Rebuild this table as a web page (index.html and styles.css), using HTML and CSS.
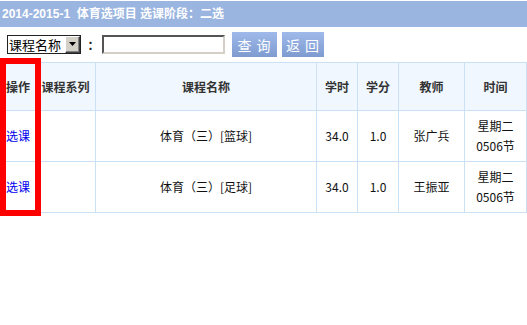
FILE: index.html
```html
<!DOCTYPE html>
<html lang="zh-CN">
<head>
<meta charset="utf-8">
<link rel="stylesheet" href="styles.css">
</head>
<body>
<div class="titlebar">2014-2015-1&nbsp; 体育选项目 选课阶段：二选</div>
<div class="toolbar">
  <span class="selbox">
    <select class="sel"><option>课程名称</option></select>
    <span class="arrow"><svg width="9" height="5" viewBox="0 0 9 5"><path d="M1 0h7L4.5 4z" fill="#000"/></svg></span>
  </span>
  <span class="colon">：</span>
  <input class="txt" type="text">
  <button class="btn btn-q">查 询</button>
  <button class="btn btn-r">返 回</button>
</div>
<div class="tablewrap">
<table class="grid">
  <colgroup>
    <col class="c1"><col class="c2"><col class="c3"><col class="c4"><col class="c5"><col class="c6"><col class="c7">
  </colgroup>
  <thead>
    <tr><th>操作</th><th>课程系列</th><th>课程名称</th><th>学时</th><th>学分</th><th>教师</th><th>时间</th></tr>
  </thead>
  <tbody>
    <tr><td><a href="#">选课</a></td><td></td><td>体育（三）[篮球]</td><td>34.0</td><td>1.0</td><td>张广兵</td><td>星期二<br>0506节</td></tr>
    <tr><td><a href="#">选课</a></td><td></td><td>体育（三）[足球]</td><td>34.0</td><td>1.0</td><td>王振亚</td><td>星期二<br>0506节</td></tr>
  </tbody>
</table>
<div class="highlight"></div>
</div>
</body>
</html>
```
FILE: styles.css
```css
html, body { margin: 0; padding: 0; background: #fff; }
body {
  font-family: "Liberation Sans", "Noto Sans CJK SC", sans-serif;
  font-size: 12px;
  color: #222;
  width: 527px;
  height: 325px;
  overflow: hidden;
}
.titlebar {
  margin-top: 1px;
  height: 26px;
  line-height: 26px;
  background: #9ab5df;
  color: #fff;
  font-weight: bold;
  padding-left: 2px;
  white-space: nowrap;
}
.toolbar {
  display: flex;
  align-items: center;
  height: 25px;
  margin-top: 5px;
  padding-left: 7px;
}
.selbox {
  display: inline-flex;
  align-items: stretch;
  width: 72px;
  height: 17px;
  border: 1px solid #222;
  background: #fff;
}
.sel {
  appearance: none;
  -webkit-appearance: none;
  flex: 1;
  min-width: 0;
  height: 17px;
  font-family: "Noto Sans CJK SC", sans-serif;
  font-size: 13px;
  line-height: 17px;
  padding: 0 0 0 1px;
  border: 0;
  border-radius: 0;
  background: #fff;
  color: #000;
  outline: none;
}
.arrow {
  width: 13px;
  display: flex;
  align-items: center;
  justify-content: center;
  background: #d4d0c8;
  border: 1px solid;
  border-color: #fff #404040 #404040 #fff;
  box-shadow: inset -1px -1px 0 #808080;
}
.colon {
  width: 21px;
  text-align: center;
  font-weight: bold;
  margin-left: 2px;
  margin-right: -2px;
}
.txt {
  width: 119px;
  height: 15px;
  padding: 0;
  border: 2px solid;
  border-color: #555 #d4d0c8 #d4d0c8 #555;
  margin: 0;
}
.btn {
  height: 25px;
  border: 0;
  padding: 0;
  color: #fff;
  font-family: "Noto Sans CJK SC", sans-serif;
  font-size: 14px;
  letter-spacing: 1px;
  background: linear-gradient(#9fbaea, #7e9bd0);
}
.btn-q { width: 45px; margin-left: 7px; }
.btn-r { width: 42px; margin-left: 5px; }
.tablewrap {
  position: relative;
  margin-top: 5px;
}
.grid {
  border-collapse: collapse;
  table-layout: fixed;
  width: 526px;
}
.c1 { width: 35px; }
.c2 { width: 60px; }
.c3 { width: 221px; }
.c4 { width: 41px; }
.c5 { width: 41px; }
.c6 { width: 66px; }
.c7 { width: 62px; }
.grid th, .grid td {
  border: 1px solid #c9e0f5;
  text-align: center;
  padding: 0;
  white-space: nowrap;
  overflow: visible;
  font-family: "Noto Sans CJK SC", sans-serif;
  font-size: 12px;
}
.grid th {
  height: 47px;
  background: #f0f7fe;
  color: #333;
  font-weight: bold;
}
.grid td {
  height: 50px;
  line-height: 20px;
  color: #111;
}
.grid td a { color: #0000ee; text-decoration: none; }
.highlight {
  position: absolute;
  left: 0;
  top: -4px;
  width: 29px;
  height: 146px;
  border: 6px solid #ff0000;
}
```
